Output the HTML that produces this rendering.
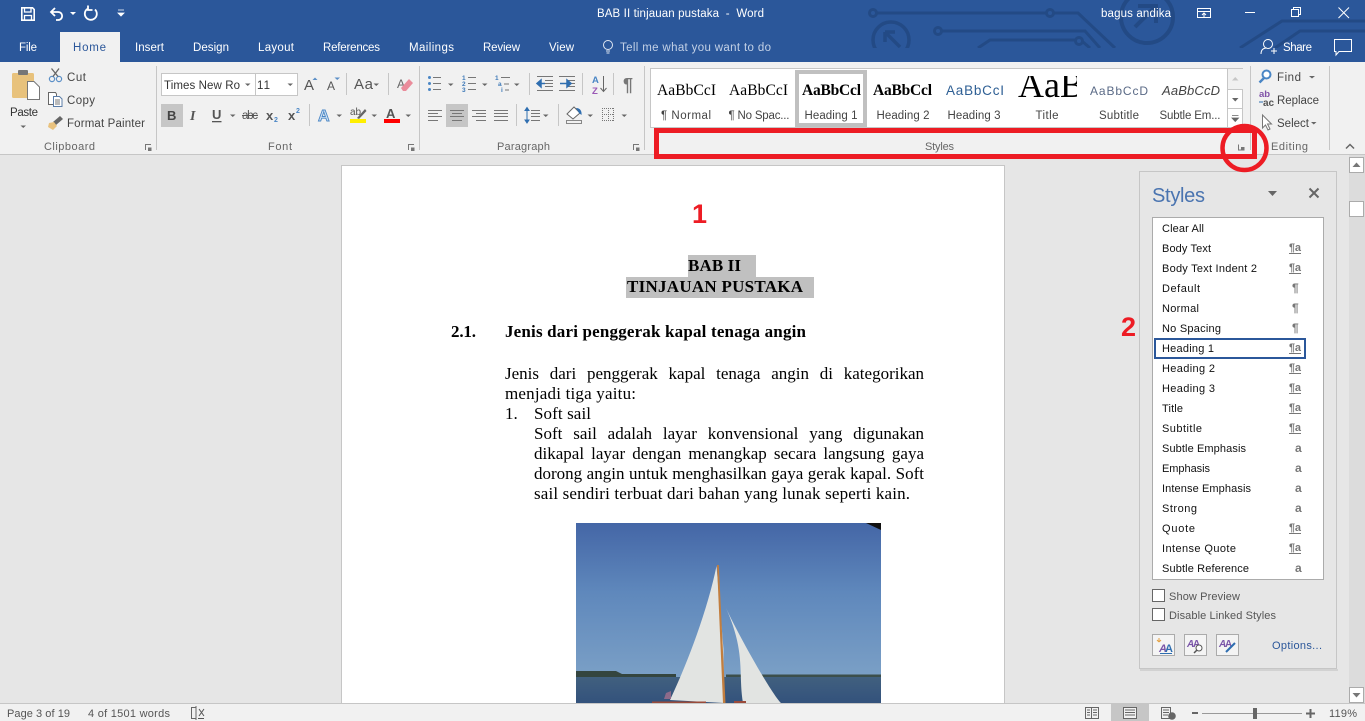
<!DOCTYPE html>
<html><head><meta charset="utf-8"><title>BAB II tinjauan pustaka - Word</title>
<style>
html,body{margin:0;padding:0;width:1365px;height:721px;overflow:hidden;background:#e6e6e6}
svg{position:absolute;left:0;top:0}
text{font-family:"Liberation Sans",sans-serif;font-size:11.5px;fill:#444;white-space:pre}
.w{fill:#fff}.tab{fill:#fff;font-size:11.5px}
.g{fill:#666;font-size:11px}
.l{fill:#444;font-size:11.5px;text-anchor:middle}
.s{font-family:"Liberation Serif",serif;font-size:17px;fill:#000}
.sb{font-family:"Liberation Serif",serif;font-size:17px;fill:#000;font-weight:bold}
.p{font-size:11px;fill:#111}
.pi{font-size:11px;fill:#777;font-weight:bold}
.st{font-size:11px;fill:#555}
.d{font-family:"Liberation Serif",serif;font-size:17px;color:#000;position:absolute;line-height:20px;text-align:justify;text-align-last:justify;height:20px;overflow:hidden}
.a{fill:#666}
</style></head><body>
<svg width="1365" height="721" viewBox="0 0 1365 721">
<rect width="1365" height="721" fill="#e6e6e6"/>
<rect width="1365" height="62" fill="#2b579a"/>
<!-- circuit decoration -->
<g fill="none" stroke="#234a85" stroke-width="3">
<path d="M876 13H1047M1053 13H1078L1115 48"/><circle cx="873" cy="13" r="3.500"/><circle cx="1050" cy="13" r="3.500"/>
<path d="M942 31H1085L1100 48"/><circle cx="938" cy="31" r="3.500"/>
<path d="M978 48L990 40H1076M1083 42L1090 48"/><circle cx="1079" cy="41" r="3.500"/>
<circle cx="891" cy="40" r="18" stroke-width="3.500"/><path d="M885 32V42M885 32H895M886 33L900 47" stroke-width="3.500"/>
<circle cx="1147" cy="17" r="26" stroke-width="4"/><path d="M1138 6H1156V23M1156 6L1135 27" stroke-width="4"/>
<path d="M1240 48L1282 21H1365M1275 48L1300 31H1365"/>
</g>
<rect x="0" y="48" width="1240" height="14" fill="#2b579a"/>
<rect x="1240" y="48" width="125" height="14" fill="#2b579a"/>
<!-- QAT -->
<g fill="none" stroke="#fff" stroke-width="1.600">
<path d="M21.800 7.800H32.500L34.200 9.500V20.200H21.800Z"/><path d="M24.500 8V12H31V8" stroke-width="1.300"/><path d="M24.500 20V15.500H31.500V20" stroke-width="1.300"/>
<path d="M55 8L51 12L55 16M51.500 12H58C63.500 12 63.500 20 58 20H56" stroke-width="1.800"/>
<path d="M88 8.500A6 6 0 1 0 95 9.500M88 5.500V10H92.500" stroke-width="1.800"/>
</g>
<path d="M70 12H76L73 15Z" fill="#fff"/>
<path d="M118 10H124M118 13H124L121 16Z" fill="#fff" stroke="#fff" stroke-width=".8"/>
<text x="597" y="17" class="w" textLength="167">BAB II tinjauan pustaka  -  Word</text>
<text x="1101" y="17" class="w" textLength="70">bagus andika</text>
<g fill="none" stroke="#fff">
<rect x="1197.500" y="8.500" width="13" height="9"/><path d="M1197 11.500H1211M1204 17V13M1202 15L1204 13 1206 15"/>
<path d="M1245 12.500H1255"/>
<rect x="1291.500" y="9.500" width="7" height="7"/><path d="M1293.500 9V7.500H1300.500V14.500H1299"/>
<path d="M1338.500 7.500L1349 18M1349 7.500L1338.500 18"/>
<circle cx="1268" cy="44" r="4.500"/><path d="M1261 54C1261 49 1264 48 1267 48"/><path d="M1271 51H1277M1274 48V54"/>
<path d="M1334.500 39.500H1351.500V51.500H1339L1336 55V51.500H1334.500Z"/>
<circle cx="608" cy="45" r="4.500" stroke="#dfe7f2"/><path d="M606 51H610M606.500 53H609.500" stroke="#dfe7f2"/>
</g>
<!-- tabs -->
<rect x="60" y="32" width="60" height="31" fill="#f1f1f1"/>
<rect y="62" width="1365" height="92" fill="#f1f1f1"/>
<rect y="154" width="1365" height="1" fill="#c6c6c6"/>
<text x="19" y="51" class="tab" textLength="18">File</text>
<text x="73" y="51" class="tab" style="fill:#2b579a" textLength="33">Home</text>
<text x="135" y="51" class="tab" textLength="29">Insert</text>
<text x="193" y="51" class="tab" textLength="36">Design</text>
<text x="258" y="51" class="tab" textLength="36">Layout</text>
<text x="323" y="51" class="tab" textLength="57">References</text>
<text x="409" y="51" class="tab" textLength="45">Mailings</text>
<text x="483" y="51" class="tab" textLength="37">Review</text>
<text x="549" y="51" class="tab" textLength="25">View</text>
<text x="620" y="51" class="tab" style="fill:#c3d1e6" textLength="151">Tell me what you want to do</text>
<text x="1283" y="51" class="tab" textLength="29">Share</text>
<!-- separators -->
<g fill="#c6c6c6">
<rect x="156" y="66" width="1" height="84"/><rect x="419" y="66" width="1" height="84"/><rect x="644" y="66" width="1" height="84"/><rect x="1250" y="66" width="1" height="84"/><rect x="1329" y="66" width="1" height="84"/>
<rect x="346" y="73" width="1" height="22"/><rect x="388" y="73" width="1" height="22"/><rect x="309" y="104" width="1" height="22"/>
<rect x="529" y="73" width="1" height="22"/><rect x="582" y="73" width="1" height="22"/><rect x="613" y="73" width="1" height="22"/><rect x="516" y="104" width="1" height="22"/><rect x="558" y="104" width="1" height="22"/>
</g>
<!-- clipboard -->
<rect x="12" y="73" width="22" height="25" rx="1.500" fill="#e8c27c"/>
<rect x="18" y="70" width="10" height="5" rx="1" fill="#777"/>
<path d="M27.500 81.500H34L39.500 87V99.500H27.500Z" fill="#fff" stroke="#777"/>
<text x="10" y="116" style="fill:#333" textLength="28">Paste</text>
<path d="M20.500 125.500H26L23.250 128Z" class="a"/>
<g fill="none" stroke="#5b8fc7" stroke-width="1.200"><circle cx="52" cy="79" r="2.600"/><circle cx="59" cy="79" r="2.600"/></g>
<path d="M53 76.500L59 68.500M58 76.500L51.500 68.500" stroke="#666" stroke-width="1.300"/>
<path d="M48.500 92.500H55.500L56.500 94V104.500H48.500Z" fill="#fff" stroke="#666"/><path d="M53.500 96.500H59.500L62 99V106.500H53.500Z" fill="#fff" stroke="#5b7da8"/><path d="M55 100H60M55 102H60M55 104H60" stroke="#777"/>
<path d="M60 116L63 119 56 125 53 122Z" fill="#666"/><path d="M49 123L54 122 57 126 53 130 48 127Z" fill="#e9c27e"/>
<text x="67" y="81" textLength="19">Cut</text>
<text x="67" y="104" textLength="28">Copy</text>
<text x="67" y="127" textLength="78">Format Painter</text>
<text x="44" y="150" class="g" textLength="51">Clipboard</text>
<path d="M145.500 150V144.500H151" fill="none" stroke="#777"/><rect x="148" y="147.500" width="3.500" height="3.500" fill="#777"/>
<path d="M408.500 150V144.500H414" fill="none" stroke="#777"/><rect x="411" y="147.500" width="3.500" height="3.500" fill="#777"/>
<path d="M633.500 150V144.500H639" fill="none" stroke="#777"/><rect x="636" y="147.500" width="3.500" height="3.500" fill="#777"/>
<!-- font -->
<rect x="161.500" y="73.500" width="136" height="22" fill="#fff" stroke="#c6c6c6"/><rect x="255" y="73" width="1" height="23" fill="#c6c6c6"/>
<text x="164" y="89" style="fill:#333" textLength="76">Times New Ro</text>
<text x="257" y="89" style="fill:#333" textLength="13">11</text>
<path d="M245 83.500H250.500L247.750 86ZM287.500 83.500H293L290.250 86Z" class="a"/>
<text x="304" y="90" style="font-size:15px;fill:#555">A</text><path d="M312.500 80L315 77.500 317.500 80Z" fill="#5b8fc7"/>
<text x="327" y="90" style="font-size:12px;fill:#555">A</text><path d="M334.500 77.500H340L337.250 80Z" fill="#5b8fc7"/>
<text x="354" y="89" style="font-size:15px;fill:#555" textLength="19">Aa</text><path d="M373.500 83.500H379L376.250 86Z" class="a"/>
<text x="397" y="88" style="font-size:12px;fill:#666">A</text><path d="M401 88L409 79 413 83 406 91H403Z" fill="#ea8c9b"/>
<rect x="161" y="104" width="22" height="23" fill="#c6c6c6"/>
<text x="167" y="120" style="font-weight:bold;font-size:13px;fill:#444">B</text>
<text x="190" y="120" style="font-family:'Liberation Serif',serif;font-style:italic;font-weight:bold;font-size:14px;fill:#555">I</text>
<text x="212" y="119" style="font-weight:bold;font-size:13px;fill:#555">U</text><rect x="212" y="121" width="9.500" height="1.300" fill="#555"/>
<path d="M230 114.500H235.500L232.750 117Z" class="a"/>
<text x="242" y="119" style="font-size:11.500px;fill:#555" textLength="16">abc</text><rect x="242" y="115" width="16" height="1" fill="#555"/>
<text x="266" y="120" style="font-weight:bold;font-size:13px;fill:#555">x</text><text x="274" y="122" style="font-size:7px;fill:#4a86c5;font-weight:bold">2</text>
<text x="288" y="120" style="font-weight:bold;font-size:13px;fill:#555">x</text><text x="296" y="113" style="font-size:7px;fill:#4a86c5;font-weight:bold">2</text>
<text x="318" y="121" style="font-weight:bold;font-size:16px;fill:#cfe2f5;stroke:#4a86c5;stroke-width:.9">A</text>
<path d="M336.500 114.500H342L339.250 117Z" class="a"/>
<text x="350" y="115" style="font-size:10px;fill:#555">ab</text><path d="M357 118L365 109 366.500 111 359 119Z" fill="#666"/>
<rect x="350" y="119" width="16" height="4" fill="#ffef00"/>
<path d="M371.500 114.500H377L374.250 117Z" class="a"/>
<text x="386" y="118" style="font-size:13px;font-weight:bold;fill:#555">A</text><rect x="384" y="119" width="16" height="4" fill="#f00"/>
<path d="M405.500 114.500H411L408.250 117Z" class="a"/>
<text x="268" y="150" class="g" textLength="24">Font</text>
<!-- paragraph -->
<g fill="#4a86c5"><circle cx="429.500" cy="77.500" r="1.500"/><circle cx="429.500" cy="83.500" r="1.500"/><circle cx="429.500" cy="89.500" r="1.500"/></g>
<path d="M433 77.500H441M433 83.500H441M433 89.500H441M468 77.500H476M468 83.500H476M468 89.500H476M501 77.500H510M504 84H509M505 90H509" stroke="#777" fill="none"/>
<text x="462" y="80" style="font-size:6.500px;fill:#3f7ab8;font-weight:bold">1</text><text x="462" y="86" style="font-size:6.500px;fill:#3f7ab8;font-weight:bold">2</text><text x="462" y="92" style="font-size:6.500px;fill:#3f7ab8;font-weight:bold">3</text>
<text x="495" y="80" style="font-size:6.500px;fill:#3f7ab8;font-weight:bold">1</text><text x="498" y="86" style="font-size:6.500px;fill:#3f7ab8;font-weight:bold">a</text><text x="501" y="92" style="font-size:6.500px;fill:#3f7ab8;font-weight:bold">i</text>
<path d="M448 83.500H453.500L450.750 86ZM482 83.500H487.500L484.750 86ZM514 83.500H519.500L516.750 86Z" class="a"/>
<path d="M537 76.500H553M545 80.500H553M545 83.500H553M545 86.500H553M537 90.500H553M559 76.500H575M567 80.500H575M567 83.500H575M567 86.500H575M559 90.500H575" stroke="#777" fill="none"/>
<path d="M537 83.500L541 80V87ZM541 83.500H545M571 83.500L567 80V87ZM560 83.500H567" stroke="#2f6eb0" fill="#2f6eb0" stroke-width="1.500"/>
<text x="592" y="83" style="font-size:9.500px;font-weight:bold;fill:#4a86c5">A</text><text x="592" y="94" style="font-size:9.500px;font-weight:bold;fill:#9b59b6">Z</text>
<path d="M603.500 76V91M600.500 88L603.500 91.500 606.500 88" stroke="#666" fill="none"/>
<text x="623" y="91" style="font-size:18px;font-weight:bold;fill:#777">¶</text>
<rect x="446" y="104" width="22" height="23" fill="#c6c6c6"/>
<path d="M428 110.500H442M428 113.500H438M428 116.500H442M428 120.500H438M450 110.500H464M452 113.500H462M450 116.500H464M452 120.500H462M472 110.500H486M476 113.500H486M472 116.500H486M476 120.500H486M494 110.500H508M494 113.500H508M494 116.500H508M494 120.500H508M531 110.500H540M531 113.500H540M531 116.500H540M531 120.500H540" stroke="#777" fill="none"/>
<path d="M527 108V122" stroke="#2f6eb0"/><path d="M525 110.500L527 107.500 529 110.500ZM525 120L527 123 529 120Z" fill="#2f6eb0" stroke="#2f6eb0"/>
<path d="M543 114.500H548.500L545.750 117ZM587.500 114.500H593L590.250 117ZM621.500 114.500H627L624.250 117Z" class="a"/>
<path d="M567 114L574 107 580 113 573 119Z" fill="#fff" stroke="#666"/><path d="M576 108C580 108 582 111 581.500 115L579 113Z" fill="#2f6eb0"/><rect x="566.500" y="120.500" width="15" height="3" fill="#f1f1f1" stroke="#888"/>
<path d="M602 108.500H614M602 114.500H614M602 120.500H614M602.500 108V121M608.500 108V121M613.500 108V121" stroke="#777" stroke-dasharray="1 1" fill="none"/>
<text x="497" y="150" class="g" textLength="53">Paragraph</text>
<!-- gallery -->
<rect x="650.500" y="68.500" width="592" height="59" fill="#fff" stroke="#c6c6c6"/>
<rect x="797" y="72" width="68" height="53" fill="none" stroke="#c0c0c0" stroke-width="4"/>
<text x="657" y="95" class="s" style="font-size:15.500px" textLength="59">AaBbCcI</text>
<text x="729" y="95" class="s" style="font-size:15.500px" textLength="59">AaBbCcI</text>
<text x="802" y="95" class="sb" style="font-size:15.500px" textLength="59">AaBbCcl</text>
<text x="873" y="95" class="sb" style="font-size:15.500px" textLength="59">AaBbCcl</text>
<text x="946" y="95" style="font-size:13.500px;fill:#2e5f94" textLength="58">AaBbCcI</text>
<svg x="1010" y="76" width="67" height="30" viewBox="0 0 67 30"><text x="8" y="21" style="font-family:'Liberation Serif',serif;font-size:36px;fill:#000">AaB</text></svg>
<text x="1090" y="95" style="font-size:12px;fill:#5a6a86" textLength="58">AaBbCcD</text>
<text x="1162" y="95" style="font-size:13px;font-style:italic;fill:#444" textLength="58">AaBbCcD</text>
<text x="686" y="119" class="l" textLength="50">¶ Normal</text>
<text x="759" y="119" class="l" textLength="61">¶ No Spac...</text>
<text x="831" y="119" class="l" textLength="53">Heading 1</text>
<text x="903" y="119" class="l" textLength="53">Heading 2</text>
<text x="974" y="119" class="l" textLength="53">Heading 3</text>
<text x="1047" y="119" class="l" textLength="23">Title</text>
<text x="1119" y="119" class="l" textLength="40">Subtitle</text>
<text x="1190" y="119" class="l" textLength="61">Subtle Em...</text>
<rect x="1228" y="69" width="15" height="20" fill="#f1f1f1"/>
<rect x="1228" y="89" width="15" height="1" fill="#c6c6c6"/><rect x="1228" y="108" width="15" height="1" fill="#c6c6c6"/><rect x="1227" y="68" width="1" height="60" fill="#c6c6c6"/>
<path d="M1232 80.500H1238.500L1235.250 77Z" fill="#c6c6c6"/><path d="M1232 98H1238.500L1235.250 101.500Z" class="a"/>
<path d="M1232 115.500H1238.500M1232 118H1238.500L1235.250 121.500Z" fill="#666" stroke="#666" stroke-width=".8"/>
<text x="925" y="150" class="g" textLength="29">Styles</text>
<!-- editing -->
<circle cx="1266.500" cy="74.500" r="4" fill="#fff" stroke="#4a86c5" stroke-width="2"/><path d="M1264 78L1259.500 82.500" stroke="#4a86c5" stroke-width="2.500"/>
<text x="1259" y="97" style="font-size:9.500px;fill:#8052a8;font-weight:bold">ab</text><text x="1263" y="106" style="font-size:10px;fill:#555;font-weight:bold">ac</text><path d="M1259 102H1263" stroke="#2f6eb0"/>
<path d="M1262.500 115V128L1265.500 125 1268 130 1270 129 1267.500 124H1271.500Z" fill="#fff" stroke="#777"/>
<text x="1277" y="81" textLength="24">Find</text><text x="1277" y="104" textLength="42">Replace</text><text x="1277" y="127" textLength="32">Select</text>
<path d="M1309 76H1315L1312 78.500ZM1311 122H1316.500L1313.750 124.500Z" class="a"/>
<text x="1271" y="150" class="g" textLength="37">Editing</text>
<path d="M1346 148.500L1350 144.500 1354 148.500" fill="none" stroke="#666" stroke-width="1.500"/>
<!-- page -->
<rect x="341.500" y="165.500" width="663" height="560" fill="#fff" stroke="#c6c6c6"/>
<rect x="688" y="255" width="68" height="22" fill="#c0c0c0"/>
<rect x="626" y="277" width="188" height="21" fill="#c0c0c0"/>
<text x="688" y="271" class="sb" textLength="53">BAB II</text>
<text x="627" y="292" class="sb" textLength="176">TINJAUAN PUSTAKA</text>
<text x="451" y="337" class="sb" textLength="25">2.1.</text>
<text x="505" y="337" class="sb" textLength="301">Jenis dari penggerak kapal tenaga angin</text>
<text x="505" y="399" class="s" textLength="131">menjadi tiga yaitu:</text>
<text x="505" y="419" class="s">1.</text>
<text x="534" y="419" class="s" textLength="57">Soft sail</text>
<text x="534" y="499" class="s" textLength="376">sail sendiri terbuat dari bahan yang lunak seperti kain.</text>
<!-- photo -->
<svg x="576" y="523" width="305" height="180" viewBox="0 0 305 180">
<defs><linearGradient id="sky" x1="0" y1="0" x2="0" y2="1"><stop offset="0" stop-color="#4466a6"/><stop offset=".45" stop-color="#5f88bc"/><stop offset="1" stop-color="#7ba0c6"/></linearGradient>
<linearGradient id="sea" x1="0" y1="0" x2="0" y2="1"><stop offset="0" stop-color="#41607f"/><stop offset="1" stop-color="#33527c"/></linearGradient></defs>
<rect width="305" height="155" fill="url(#sky)"/>
<rect y="154" width="305" height="26" fill="url(#sea)"/>
<path d="M0 148H40L46 151H100V154H0Z" fill="#34453f"/>
<path d="M150 151.500H305V154H150Z" fill="#3c4f4c"/>
<path d="M290 0H305V7Z" fill="#111"/>
<path d="M140.500 43C133 80 116 130 94 177L148 180 147.500 126Z" fill="#e2e4e2"/>
<path d="M141 42L142.800 42 149.500 180H147Z" fill="#c27e3f"/>
<path d="M150 85C163 113 195 170 205 180H167C162 150 170 130 150 85Z" fill="#e2e4e2"/>
<path d="M76 178.500H130V180H76ZM158 178H170V180H158Z" fill="#9a4a3a"/>
<path d="M90 170L95 168 95 176 88 176Z" fill="#8d6a8a"/>
</svg>
<!-- scrollbar -->
<rect x="1349" y="155" width="16" height="548" fill="#dcdcdc"/>
<rect x="1349.500" y="157.500" width="14" height="15" fill="#fff" stroke="#ababab"/>
<path d="M1352.500 167H1360.500L1356.500 162.500Z" fill="#777"/>
<rect x="1349.500" y="201.500" width="14" height="15" fill="#fff" stroke="#ababab"/>
<rect x="1349.500" y="687.500" width="14" height="15" fill="#fff" stroke="#ababab"/>
<path d="M1352.500 693H1360.500L1356.500 697.500Z" fill="#777"/>
<!-- styles pane -->
<rect x="1139.500" y="171.500" width="197" height="497" fill="#e6e6e6" stroke="#c6c6c6"/>
<rect x="1140" y="669" width="198" height="2" fill="#d2d2d2"/>
<text x="1152" y="202" style="font-size:20px;fill:#4a74b0" textLength="53">Styles</text>
<path d="M1268 191H1277L1272.500 196Z" fill="#666"/>
<path d="M1309.500 188.500L1318.500 197.500M1318.500 188.500L1309.500 197.500" stroke="#666" stroke-width="2" fill="none"/>
<rect x="1152.500" y="217.500" width="171" height="362" fill="#fff" stroke="#ababab"/>
<rect x="1155" y="339" width="150" height="19" fill="#fff" stroke="#2b579a" stroke-width="2"/>
<text x="1162" y="232" class="p" textLength="42">Clear All</text>
<text x="1162" y="252" class="p" textLength="49">Body Text</text>
<text x="1162" y="272" class="p" textLength="95">Body Text Indent 2</text>
<text x="1162" y="292" class="p" textLength="38">Default</text>
<text x="1162" y="312" class="p" textLength="37">Normal</text>
<text x="1162" y="332" class="p" textLength="59">No Spacing</text>
<text x="1162" y="352" class="p" textLength="52">Heading 1</text>
<text x="1162" y="372" class="p" textLength="53">Heading 2</text>
<text x="1162" y="392" class="p" textLength="53">Heading 3</text>
<text x="1162" y="412" class="p" textLength="21">Title</text>
<text x="1162" y="432" class="p" textLength="40">Subtitle</text>
<text x="1162" y="452" class="p" textLength="84">Subtle Emphasis</text>
<text x="1162" y="472" class="p" textLength="48">Emphasis</text>
<text x="1162" y="492" class="p" textLength="89">Intense Emphasis</text>
<text x="1162" y="512" class="p" textLength="35">Strong</text>
<text x="1162" y="532" class="p" textLength="33">Quote</text>
<text x="1162" y="552" class="p" textLength="74">Intense Quote</text>
<text x="1162" y="572" class="p" textLength="87">Subtle Reference</text>
<text x="1289" y="251" class="pi" textLength="12">¶a</text><text x="1289" y="271" class="pi" textLength="12">¶a</text>
<text x="1292" y="292" class="pi" style="font-size:12px">¶</text><text x="1292" y="312" class="pi" style="font-size:12px">¶</text><text x="1292" y="332" class="pi" style="font-size:12px">¶</text>
<text x="1289" y="351" class="pi" textLength="12">¶a</text><text x="1289" y="371" class="pi" textLength="12">¶a</text><text x="1289" y="391" class="pi" textLength="12">¶a</text><text x="1289" y="411" class="pi" textLength="12">¶a</text><text x="1289" y="431" class="pi" textLength="12">¶a</text>
<text x="1295" y="452" class="pi" style="font-size:12px">a</text><text x="1295" y="472" class="pi" style="font-size:12px">a</text><text x="1295" y="492" class="pi" style="font-size:12px">a</text><text x="1295" y="512" class="pi" style="font-size:12px">a</text>
<text x="1289" y="531" class="pi" textLength="12">¶a</text><text x="1289" y="551" class="pi" textLength="12">¶a</text>
<text x="1295" y="572" class="pi" style="font-size:12px">a</text>
<path d="M1289 253.500H1301M1289 273.500H1301M1289 353.500H1301M1289 373.500H1301M1289 393.500H1301M1289 413.500H1301M1289 433.500H1301M1289 533.500H1301M1289 553.500H1301" stroke="#777" fill="none"/>
<rect x="1152.500" y="589.500" width="12" height="12" fill="#fff" stroke="#666"/>
<rect x="1152.500" y="608.500" width="12" height="12" fill="#fff" stroke="#666"/>
<text x="1169" y="600" class="st" textLength="71">Show Preview</text>
<text x="1169" y="619" class="st" textLength="107">Disable Linked Styles</text>
<rect x="1152.500" y="634.500" width="22" height="21" fill="#f4f4f4" stroke="#ababab"/>
<rect x="1184.500" y="634.500" width="22" height="21" fill="#f4f4f4" stroke="#ababab"/>
<rect x="1216.500" y="634.500" width="22" height="21" fill="#f4f4f4" stroke="#ababab"/>
<path d="M1157 640L1159 642M1159 638V642M1161 640L1159 642" stroke="#e3a040" fill="none"/>
<text x="1159" y="652" style="font-size:11px;font-style:italic;font-weight:bold;fill:#7a55a8">A</text><text x="1165" y="652" style="font-size:11px;font-weight:bold;fill:#2f6eb0">A</text><path d="M1160 653.500H1172" stroke="#2f6eb0"/>
<text x="1187" y="647" style="font-size:10px;font-style:italic;font-weight:bold;fill:#7a55a8">A</text><text x="1193" y="647" style="font-size:10px;font-weight:bold;fill:#7a55a8">A</text><circle cx="1199" cy="648" r="3" fill="#fff" stroke="#555"/><path d="M1197 650L1194 653" stroke="#555" stroke-width="1.500"/>
<text x="1219" y="647" style="font-size:10px;font-style:italic;font-weight:bold;fill:#7a55a8">A</text><text x="1225" y="647" style="font-size:10px;font-weight:bold;fill:#7a55a8">A</text><path d="M1226 652L1235 643" stroke="#2f6eb0" stroke-width="2"/>
<text x="1272" y="649" style="font-size:11px;fill:#2b579a" textLength="50">Options...</text>
<!-- annotations -->
<rect x="656.500" y="130.500" width="598" height="26" fill="none" stroke="#ed1c24" stroke-width="5"/>
<path d="M1238.500 144.500V150H1244" fill="none" stroke="#777"/><rect x="1241" y="147" width="3.500" height="3.500" fill="#777"/>
<circle cx="1244.500" cy="148" r="22" fill="none" stroke="#ed1c24" stroke-width="4.500"/>
<text x="692" y="223" style="font-size:27px;font-weight:bold;fill:#ed1c24">1</text>
<text x="1121" y="336" style="font-size:27px;font-weight:bold;fill:#ed1c24">2</text>
<!-- status -->
<rect y="703" width="1365" height="18" fill="#f1f1f1"/><rect y="703" width="1365" height="1" fill="#c6c6c6"/>
<text x="7" y="717" class="st" textLength="63">Page 3 of 19</text>
<text x="88" y="717" class="st" textLength="82">4 of 1501 words</text>
<path d="M196 707.500H191.500V718.500H196M196 706V720" stroke="#666" fill="none"/><path d="M199 709L204 716M204 709L199 716M198 718.500H204" stroke="#555" fill="none"/>
<rect x="1111" y="704" width="38" height="17" fill="#c6c6c6"/>
<path d="M1085.500 707.500H1091.500V718.500H1085.500ZM1091.500 707.500H1098.500V718.500H1091.500ZM1087 710H1090M1087 712.500H1090M1087 715H1090M1093 710H1097M1093 712.500H1097M1093 715H1097" stroke="#666" fill="none"/>
<rect x="1123.500" y="707.500" width="13" height="11" fill="#f1f1f1" stroke="#666"/><path d="M1125 710H1135M1125 712.500H1135M1125 715H1135" stroke="#666" fill="none"/>
<path d="M1161.500 707.500H1170.500V718.500H1161.500ZM1163 710H1169M1163 712.500H1169M1163 715H1168" stroke="#666" fill="none"/><circle cx="1172" cy="716" r="3.800" fill="#666"/>
<rect x="1192" y="712" width="6" height="2" fill="#666"/>
<rect x="1202" y="713" width="100" height="1" fill="#999"/>
<rect x="1253" y="708" width="4" height="11" fill="#666"/>
<path d="M1306 713.500H1315M1310.500 709V718" stroke="#666" stroke-width="2" fill="none"/>
<text x="1329" y="717" class="st" textLength="28">119%</text>
</svg>
<div class="d" style="left:505px;top:364px;width:419px">Jenis dari penggerak kapal tenaga angin di kategorikan</div>
<div class="d" style="left:534px;top:424px;width:390px">Soft sail adalah layar konvensional yang digunakan</div>
<div class="d" style="left:534px;top:444px;width:390px">dikapal layar dengan menangkap secara langsung gaya</div>
<div class="d" style="left:534px;top:464px;width:390px">dorong angin untuk menghasilkan gaya gerak kapal. Soft</div>
</body></html>
